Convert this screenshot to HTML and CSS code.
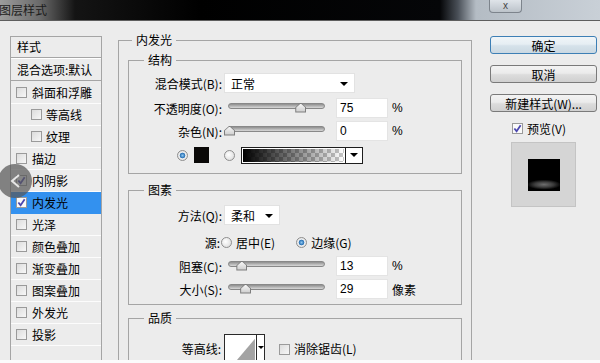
FILE: index.html
```html
<!DOCTYPE html>
<html lang="zh-CN">
<head>
    <meta charset="UTF-8">
    <meta name="viewport" content="width=device-width, initial-scale=1.0">
    <title>图层样式</title>
    <link rel="stylesheet" href="styles.css">
</head>
<body>
    <div class="titlebar">
        <span class="title">图层样式</span>
        <span class="close">x</span>
    </div>

    <div class="dialog">
        <!-- left: effect list -->
        <div class="style-list">
            <div class="list-head">样式</div>
            <div class="list-blend">混合选项:默认</div>
            <ul class="effects">
                <li><span class="check"></span>斜面和浮雕</li>
                <li class="sub"><span class="check"></span>等高线</li>
                <li class="sub"><span class="check"></span>纹理</li>
                <li><span class="check"></span>描边</li>
                <li><span class="check on"><svg viewBox="0 0 10 10"><path d="M1.5 5 L4 8 L8.5 1.5"/></svg></span>内阴影</li>
                <li class="active"><span class="check on"><svg viewBox="0 0 10 10"><path d="M1.5 5 L4 8 L8.5 1.5"/></svg></span>内发光</li>
                <li><span class="check"></span>光泽</li>
                <li><span class="check"></span>颜色叠加</li>
                <li><span class="check"></span>渐变叠加</li>
                <li><span class="check"></span>图案叠加</li>
                <li><span class="check"></span>外发光</li>
                <li><span class="check"></span>投影</li>
            </ul>
        </div>

        <!-- middle: inner glow settings -->
        <fieldset class="panel">
            <legend>内发光</legend>

            <fieldset class="group structure">
                <legend>结构</legend>
                <div class="row">
                    <label class="lbl">混合模式(B):</label>
                    <div class="select blend">正常<span class="arrow"></span></div>
                </div>
                <div class="row gap5">
                    <label class="lbl">不透明度(O):</label>
                    <div class="slider"><span class="thumb" style="left: 75%"></span></div>
                    <div class="num">75</div>
                    <span class="unit">%</span>
                </div>
                <div class="row gap3">
                    <label class="lbl">杂色(N):</label>
                    <div class="slider"><span class="thumb" style="left: 0%"></span></div>
                    <div class="num">0</div>
                    <span class="unit">%</span>
                </div>
                <div class="row color-row">
                    <span class="radio on"></span>
                    <span class="swatch"></span>
                    <span class="radio second"></span>
                    <div class="gradient-pick">
                        <span class="ramp"></span>
                        <span class="drop"><span class="arrow"></span></span>
                    </div>
                </div>
            </fieldset>

            <fieldset class="group elements">
                <legend>图素</legend>
                <div class="row">
                    <label class="lbl">方法(Q):</label>
                    <div class="select method">柔和<span class="arrow"></span></div>
                </div>
                <div class="row source-row">
                    <label class="lbl short">源:</label>
                    <span class="radio"></span>
                    <span class="opt">居中(E)</span>
                    <span class="radio on second"></span>
                    <span class="opt">边缘(G)</span>
                </div>
                <div class="row gap4">
                    <label class="lbl">阻塞(C):</label>
                    <div class="slider"><span class="thumb" style="left: 13%"></span></div>
                    <div class="num">13</div>
                    <span class="unit">%</span>
                </div>
                <div class="row gap3">
                    <label class="lbl">大小(S):</label>
                    <div class="slider"><span class="thumb" style="left: 17%"></span></div>
                    <div class="num">29</div>
                    <span class="unit">像素</span>
                </div>
            </fieldset>

            <fieldset class="group quality">
                <legend>品质</legend>
                <div class="row contour-row">
                    <label class="lbl">等高线:</label>
                    <div class="contour">
                        <svg class="curve" viewBox="0 0 31 30"><polygon points="9,30 31,4 31,30"/></svg>
                        <span class="drop"><span class="arrow small"></span></span>
                    </div>
                    <span class="check"></span>
                    <span class="opt">消除锯齿(L)</span>
                </div>
            </fieldset>
        </fieldset>

        <!-- right: buttons and preview -->
        <div class="actions">
            <button class="btn default">确定</button>
            <button class="btn">取消</button>
            <button class="btn">新建样式(W)...</button>
            <div class="preview-toggle">
                <span class="check on"><svg viewBox="0 0 10 10"><path d="M1.5 5 L4 8 L8.5 1.5"/></svg></span>
                <span>预览(V)</span>
            </div>
            <div class="preview"><span class="swatch-glow"></span></div>
        </div>
    </div>

    <div class="cursor-hint">
        <svg viewBox="0 0 34 34"><polyline points="21,11 14,17 21,23"/></svg>
    </div>
</body>
</html>
```

FILE: styles.css
```css
* {
    box-sizing: border-box;
}
body {
    margin: 0;
    width: 600px;
    height: 363px;
    overflow: hidden;
    position: relative;
    background: #ececec;
    font-family: "Noto Sans CJK SC", "Liberation Sans", sans-serif;
    font-size: 12px;
    color: #000;
}
body::after {
    content: "";
    position: absolute;
    left: 0;
    right: 0;
    bottom: 0;
    height: 3px;
    background: #fbfbfb;
}

/* title bar */
.titlebar {
    height: 21px;
    display: flex;
    justify-content: space-between;
    align-items: flex-start;
    border-bottom: 1px solid #5e5e5e;
    background: linear-gradient(to right, #9c9c9c 0, #6a6a6a 40px, #141414 75px, #000 200px, #050608 440px, #4a5058 458px, #b4bcc4 476px, #c9d0d7 100%);
}
.title {
    margin-left: -1px;
    line-height: 20px;
    color: #1c1c1c;
}
.close {
    width: 33px;
    height: 13px;
    margin-right: 78px;
    border: 1px solid #7d848c;
    border-top: none;
    border-radius: 0 0 4px 4px;
    background: linear-gradient(#dfe4e9, #bcc3ca);
    color: #444;
    font-family: "Liberation Sans", sans-serif;
    font-size: 10px;
    line-height: 11px;
    text-align: center;
}

.dialog {
    display: flex;
    align-items: flex-start;
    padding-left: 10px;
}

/* checkboxes and radios */
.check {
    display: inline-block;
    width: 11px;
    height: 11px;
    flex: none;
    border: 1px solid #9a9a9a;
    background: linear-gradient(135deg, #dcdcdc, #f7f7f7);
}
.check.on {
    background: #fafafa;
}
.check svg {
    display: block;
    width: 9px;
    height: 9px;
}
.check path {
    fill: none;
    stroke: #4b47b0;
    stroke-width: 2;
}
.radio {
    display: inline-block;
    width: 11px;
    height: 11px;
    flex: none;
    border: 1px solid #8e8e8e;
    border-radius: 50%;
    background: radial-gradient(circle at 40% 40%, #fff, #d6d6d6);
}
.radio.on {
    background: radial-gradient(circle at 50% 50%, #8cc6f0 0, #2870b4 2.5px, #f2f2f2 3.2px, #d0d0d0 100%);
}

/* effect list */
.style-list {
    width: 92px;
    height: 340px;
    margin-top: 15px;
    border: 1px solid #a5a5a5;
}
.list-head {
    height: 21px;
    line-height: 20px;
    padding-left: 6px;
    border-bottom: 1px solid #a5a5a5;
}
.list-blend {
    height: 23px;
    line-height: 21px;
    padding-left: 6px;
    border-top: 1px solid #fff;
    border-bottom: 1px solid #a5a5a5;
}
.effects {
    list-style: none;
    margin: 0;
    padding: 1px 0 0;
}
.effects li {
    height: 22px;
    display: flex;
    align-items: center;
    gap: 5px;
    padding-left: 5px;
    border-bottom: 1px solid #fcfcfc;
}
.effects li.sub {
    padding-left: 20px;
    gap: 4px;
}
.effects li.active {
    background: #3391ef;
    border-bottom-color: #3391ef;
}

/* fieldsets */
fieldset {
    margin: 0;
    padding: 0;
    min-width: 0;
    border: 1px solid #a5a5a5;
}
legend {
    padding: 0 4px;
    line-height: 14px;
}
.panel {
    width: 354px;
    height: 340px;
    margin: 12px 0 0 16px;
    padding: 6px 9px 0;
}
.panel > legend {
    margin-left: 4px;
}
.group > legend {
    margin-left: 15px;
}
.structure {
    padding: 6px 0 9px;
}
.elements {
    margin-top: 9px;
    padding: 8px 0 5px;
}
.quality {
    margin-top: 6px;
    padding: 9px 0 20px;
}

/* rows */
.row {
    display: flex;
    align-items: center;
    height: 20px;
}
.gap3 { margin-top: 3px; }
.gap4 { margin-top: 4px; }
.gap5 { margin-top: 5px; }
.lbl {
    width: 93px;
    text-align: right;
}
.lbl.short {
    width: 91px;
}
.select {
    position: relative;
    height: 20px;
    margin-left: 2px;
    padding-left: 6px;
    line-height: 19px;
    background: #fff;
    border: 1px solid #e2e2e2;
}
.select.blend { width: 131px; }
.select.method { width: 56px; }
.select .arrow {
    position: absolute;
    right: 6px;
    top: 8px;
}
.arrow {
    display: block;
    width: 0;
    height: 0;
    border-left: 4px solid transparent;
    border-right: 4px solid transparent;
    border-top: 4px solid #000;
}
.arrow.small {
    border-left-width: 3px;
    border-right-width: 3px;
    border-top-width: 3px;
}

/* sliders */
.slider {
    position: relative;
    width: 97px;
    height: 6px;
    margin-left: 6px;
    margin-top: -5px;
    border: 1px solid #888;
    border-radius: 3px;
    background: linear-gradient(#8e8e8e, #d8d8d8);
}
.thumb {
    position: absolute;
    top: -1px;
    width: 11px;
    height: 10px;
    margin-left: -5px;
    background: #7e7e7e;
    clip-path: polygon(50% 0, 100% 50%, 100% 100%, 0 100%, 0 50%);
}
.thumb::after {
    content: "";
    position: absolute;
    inset: 1px;
    background: linear-gradient(#f6f6f6, #cdcdcd);
    clip-path: polygon(50% 0, 100% 50%, 100% 100%, 0 100%, 0 50%);
}
.num {
    width: 52px;
    height: 20px;
    margin-left: 11px;
    padding-left: 3px;
    background: #fff;
    border: 1px solid #e4e4e4;
    font-family: "Liberation Sans", sans-serif;
    line-height: 18px;
}
.unit {
    margin-left: 4px;
    font-family: "Liberation Sans", "Noto Sans CJK SC", sans-serif;
}

/* colour / gradient row */
.color-row {
    margin-top: 5px;
    height: 18px;
    padding-left: 48px;
}
.swatch {
    width: 15px;
    height: 16px;
    margin-left: 6px;
    background: #0a0908;
}
.radio.second {
    margin-left: 15px;
}
.gradient-pick {
    display: flex;
    width: 122px;
    height: 17px;
    margin-left: 6px;
    border: 1px solid #1e1e1e;
}
.ramp {
    flex: 1;
    border: 1px solid #fff;
    background:
        linear-gradient(to right, #000, rgba(0, 0, 0, 0)),
        conic-gradient(#c6c6c6 25%, #fff 0 50%, #c6c6c6 0 75%, #fff 0) 0 0 / 8px 8px;
}
.gradient-pick .drop {
    width: 17px;
    display: flex;
    align-items: center;
    justify-content: center;
    border-left: 1px solid #1e1e1e;
    background: #fff;
}

/* source row */
.source-row {
    margin-top: 7px;
}
.source-row .radio {
    margin-left: 1px;
}
.source-row .radio.second {
    margin-left: 21px;
}
.opt {
    margin-left: 4px;
}

/* contour */
.contour-row {
    height: 30px;
    align-items: flex-start;
}
.contour-row .lbl {
    line-height: 30px;
    width: 92px;
}
.contour {
    display: flex;
    width: 41px;
    height: 30px;
    margin-left: 3px;
    border: 1px solid #2a2a2a;
    background: #fff;
}
.curve {
    width: 31px;
    height: 28px;
}
.curve polygon {
    fill: #a3a3a3;
}
.contour .drop {
    flex: 1;
    display: flex;
    justify-content: center;
    padding-top: 11px;
    border-left: 1px solid #2a2a2a;
}
.contour-row .check {
    margin: 10px 0 0 14px;
}
.contour-row .opt {
    line-height: 30px;
}

/* right column */
.actions {
    width: 107px;
    margin: 15px 0 0 18px;
    display: flex;
    flex-direction: column;
}
.btn {
    height: 18px;
    margin: 0 0 11px;
    padding: 0;
    font-family: inherit;
    font-size: 12px;
    line-height: 15px;
    color: #000;
    border: 1px solid #7a7a7a;
    border-radius: 3px;
    background: linear-gradient(#f3f3f3 0, #ebebeb 45%, #dcdcdc 55%, #d0d0d0 100%);
}
.btn.default {
    border-color: #3d7fb5;
    background: linear-gradient(#f0f5f8 0, #e6eef3 45%, #d6e2ea 55%, #cad8e2 100%);
}
.btn:nth-child(3) {
    margin-bottom: 9px;
}
.preview-toggle {
    display: flex;
    align-items: center;
    gap: 4px;
    height: 14px;
    margin-left: 22px;
}
.preview {
    width: 65px;
    height: 65px;
    margin: 7px 0 0 21px;
    padding: 16px;
    border: 1px solid #c4c4c4;
    background: #d5d5d5;
}
.swatch-glow {
    display: block;
    width: 32px;
    height: 32px;
    background:
        radial-gradient(ellipse 17px 5px at 50% 80%, #6e6e6e, #3c3c3c 55%, rgba(0, 0, 0, 0) 100%),
        #000;
}

/* screen capture pointer overlay */
.cursor-hint {
    position: absolute;
    left: -2px;
    top: 164px;
    width: 34px;
    height: 34px;
    border-radius: 50%;
    background: rgba(88, 88, 88, 0.72);
}
.cursor-hint svg {
    width: 34px;
    height: 34px;
}
.cursor-hint polyline {
    fill: none;
    stroke: #e6e6e6;
    stroke-width: 2;
}
```
